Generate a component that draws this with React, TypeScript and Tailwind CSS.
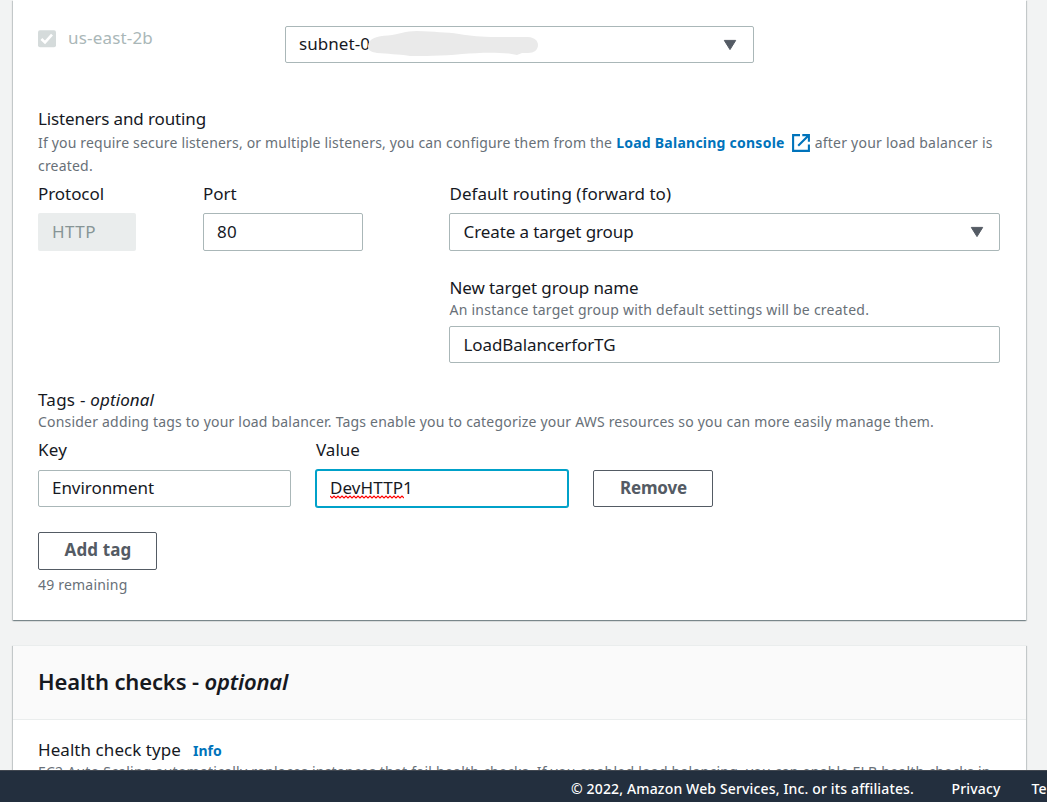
import type { ReactNode } from "react";

function Label({ children, className = "" }: { children: ReactNode; className?: string }) {
  return <div className={`h-[22px] whitespace-nowrap text-[17px] leading-[24px] text-[#16191f] ${className}`}>{children}</div>;
}

function Hint({ children, className = "" }: { children: ReactNode; className?: string }) {
  return <div className={`whitespace-nowrap text-[14px] leading-[22px] tracking-[0.2px] text-[#687078] ${className}`}>{children}</div>;
}

function Field({ children, className = "" }: { children: ReactNode; className?: string }) {
  return (
    <div className={`flex items-center rounded-[2px] border border-[#aab7b8] bg-white px-[13px] text-[17px] leading-[22px] whitespace-nowrap text-[#16191f] ${className}`}>
      {children}
    </div>
  );
}

function Caret({ className = "mr-[3px]" }: { className?: string }) {
  return (
    <svg className={`ml-auto h-[12px] w-[14px] shrink-0 ${className}`} viewBox="0 0 14 12">
      <path d="M1.3 1.4H12.7L7 10.6Z" fill="#545b64" stroke="#545b64" strokeLinejoin="round" />
    </svg>
  );
}

function ExternalIcon() {
  return (
    <svg className="mr-[5px] ml-[7px] h-[18px] w-[18px] shrink-0" viewBox="0 0 18 18" fill="none" stroke="#0073bb" strokeWidth="2.1">
      <path d="M8 1.1H1.100V16.900H16.900V10.500M10.300 1.100H16.900V7.700M16.500 1.500L6.200 11.800" />
    </svg>
  );
}

function Button({ children, className = "" }: { children: ReactNode; className?: string }) {
  return (
    <button className={`flex items-center justify-center rounded-[2px] border border-[#545b64] bg-white text-[17px] leading-[22px] font-bold text-[#545b64] ${className}`}>
      {children}
    </button>
  );
}

const panelShadow = "shadow-[0_1px_1px_0_rgba(0,28,36,0.3),1px_1px_1px_0_rgba(0,28,36,0.15),-1px_1px_1px_0_rgba(0,28,36,0.15)]";

export default function App() {
  return (
    <div className="flex h-[802px] w-[1047px] flex-col overflow-hidden bg-[#f2f3f3] font-['Noto_Sans',sans-serif]">
      <main className="min-h-0 flex-1 overflow-hidden pr-[21px] pl-[13px]">
        <section className={`h-[620px] bg-white px-[25px] ${panelShadow}`}>
          <div className="flex h-[107px] items-start pt-[26px]">
            <div className="flex w-[247px] items-center">
              <svg className="mt-[3px] h-[18px] w-[18px]" viewBox="0 0 18 18">
                <rect y="0.3" width="18" height="17" rx="2" fill="#d5dbdb" />
                <path d="M3.4 9L7 12.4L14 4.6" fill="none" stroke="#fff" strokeWidth="2.6" />
              </svg>
              <Label className="ml-3 tracking-[0.18px] text-[#aab7b8]!">us-east-2b</Label>
            </div>
            <Field className="relative h-[37px] w-[469px]">
              <span className="mb-[1px] tracking-[0.05px]">subnet-0</span>
              <svg className="absolute top-[3px] left-[82px] h-[27px] w-[172px]" viewBox="0 0 172 27" fill="#eaeaea">
                <path d="M0 16C1 8 9 6 20 5.5C32 4 37 1 49 1C66 2 78 2 91 4C103 6 113 7 128 7H160C167 7.500 170 11 170 15C170 20 166 23 160 23H154L149 25L141 23.500C123 22 109 23 94 24C75 26 53 26 42 26C29 24 20 24 9 23C4 22 0 21 0 16Z" />
              </svg>
              <Caret />
            </Field>
          </div>

          <Label className="tracking-[-0.13px]">Listeners and routing</Label>
          <Hint className="mt-[3px] flex h-[23px]">
            <span className="tracking-[0.18px]">If you require secure listeners, or multiple listeners, you can configure them from the</span>
            <a className="ml-[4px] flex font-bold tracking-[0.24px] text-[#0073bb]">Load Balancing console<span className="flex h-[22px] items-center"><ExternalIcon /></span></a>
            <span className="tracking-[0.23px]">after your load balancer is</span>
          </Hint>
          <Hint className="h-[27px]">created.</Hint>

          <div className="flex h-[206px] items-start">
            <div className="w-[165px]">
              <Label className="tracking-[-0.06px]">Protocol</Label>
              <div className="mt-[9px] flex h-[38px] w-[98px] items-center rounded-[2px] bg-[#eaeded] px-[14px] text-[17px] tracking-[0.46px] text-[#879596]">HTTP</div>
            </div>
            <div className="w-[246px]">
              <Label>Port</Label>
              <Field className="mt-[9px] h-[38px] w-[160px] tracking-[0.27px]">80</Field>
            </div>
            <div className="w-[551px]">
              <Label className="pl-[0.5px] tracking-[0.04px]">Default routing (forward to)</Label>
              <Field className="mt-[9px] h-[38px] pl-[13.5px]! tracking-[-0.1px]">Create a target group<Caret className="mr-[2px]" /></Field>
              <Label className="mt-[25px] pl-[0.5px] tracking-[-0.115px]">New target group name</Label>
              <Hint className="mt-[1px] h-[27px] pl-[0.5px] tracking-[0.245px]!">An instance target group with default settings will be created.</Hint>
              <Field className="h-[37px] pl-[13.5px]! tracking-[-0.1px]">LoadBalancerforTG</Field>
            </div>
          </div>

          <Label><span className="tracking-[0.25px]">Tags - </span><em className="tracking-[0.1px]">optional</em></Label>
          <Hint className="mt-[1px] h-[27px]">Consider adding tags to your load balancer. Tags enable you to categorize your AWS resources so you can more easily manage them.</Hint>

          <div className="flex">
            <div className="w-[278px]">
              <Label className="tracking-[0.18px]">Key</Label>
              <Field className="mt-[10px] h-[37px] w-[253px] pb-[1px] tracking-[-0.05px]">Environment</Field>
            </div>
            <div className="w-[277px]">
              <Label>Value</Label>
              <Field className="mt-[10px] h-[37px] w-[252px] border-[#00a1c9]! pb-[1px] tracking-[0.1px] shadow-[0_0_0_1px_#00a1c9]">
                <span className="relative">
                  DevHTTP1
                  <svg className="absolute top-[18px] left-0 h-[4px] w-[74px]" viewBox="0 0 74 4" fill="none" stroke="#f00" strokeWidth="1.1">
                    <path d="M0 1L2 3L4 1L6 3L8 1L10 3L12 1L14 3L16 1L18 3L20 1L22 3L24 1L26 3L28 1L30 3L32 1L34 3L36 1L38 3L40 1L42 3L44 1L46 3L48 1L50 3L52 1L54 3L56 1L58 3L60 1L62 3L64 1L66 3L68 1L70 3L72 1L74 3" />
                  </svg>
                </span>
              </Field>
            </div>
            <Button className="mt-8 h-[37px] w-[120px] pb-[1px] pl-[1px] tracking-[-0.17px]">Remove</Button>
          </div>
          <Button className="mt-[25px] h-[38px] w-[119px] pb-[2px] pl-[1px] tracking-[0.145px]">Add tag</Button>
          <Hint className="mt-[4px]">49 remaining</Hint>
        </section>

        <section className={`mt-[25px] h-[200px] bg-white ${panelShadow}`}>
          <header className="flex h-[75px] items-center border-t border-b border-[#eaeded] bg-[#fafafa] px-[25px] pb-[4px]">
            <h2 className="text-[22px] leading-[28px] font-semibold tracking-[-0.13px] whitespace-pre text-[#16191f]">Health checks - <em className="tracking-[-0.2px]">optional</em></h2>
          </header>
          <div className="px-[25px] pt-[18px]">
            <Label className="flex tracking-[0.06px]">Health check type<a className="ml-[12px] text-[14px] leading-[26px] font-bold text-[#0073bb]">Info</a></Label>
            <Hint className="mt-[1px] tracking-[0.245px]!">EC2 Auto Scaling automatically replaces instances that fail health checks. If you enabled load balancing, you can enable ELB health checks in</Hint>
          </div>
        </section>
      </main>
      <footer className="z-10 flex h-[32px] shrink-0 items-start overflow-hidden border-t border-[#414750] bg-[#232f3e] pt-[7px] pl-[571px] text-[14px] leading-[22px] font-medium tracking-[0.15px] whitespace-nowrap text-white">
        <span className="w-[380.500px] shrink-0">© 2022, Amazon Web Services, Inc. or its affiliates.</span>
        <span className="w-[80px] shrink-0">Privacy</span>
        <span className="shrink-0">Te</span>
      </footer>
    </div>
  );
}
